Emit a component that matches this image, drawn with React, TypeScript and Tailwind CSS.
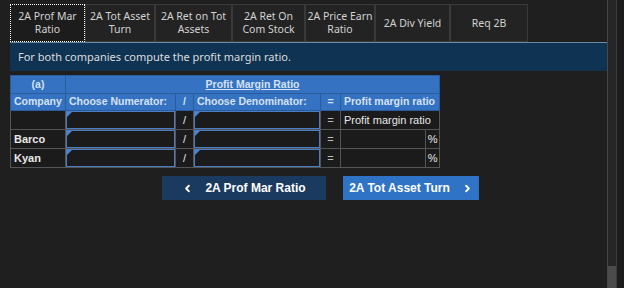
import React from "react";
import { ChevronLeft, ChevronRight } from "lucide-react";

const tabs = [
  { label: "2A Prof Mar Ratio", w: "w-[75px]", active: true },
  { label: "2A Tot Asset Turn", w: "w-[70px]" },
  { label: "2A Ret on Tot Assets", w: "w-[77px]" },
  { label: "2A Ret On Com Stock", w: "w-[73px]" },
  { label: "2A Price Earn Ratio", w: "w-[70px]" },
  { label: "2A Div Yield", w: "w-[75px]" },
  { label: "Req 2B", w: "w-[78px]" },
];

function InputCell() {
  return (
    <td className="border border-[#555] p-0 h-[19px]">
      <div className="relative h-[18px] border border-[#4a7ec4] bg-[#1b1b1b]">
        <span className="absolute left-0 top-0 w-0 h-0 border-t-[5px] border-t-[#4a86d0] border-r-[5px] border-r-transparent" />
      </div>
    </td>
  );
}

const rows = [
  { name: "", result: true },
  { name: "Barco" },
  { name: "Kyan" },
];

export default function App() {
  return (
    <div className="w-[624px] h-[288px] bg-[#1f1f1f] flex overflow-hidden" style={{ fontFamily: '"Noto Sans", sans-serif' }}>
      <div className="flex-1 pl-[10px] pt-[4px] flex flex-col">
        <div className="flex">
          {tabs.map((t) => (
            <div
              key={t.label}
              className={`${t.w} h-[38px] flex items-center justify-center text-center text-[10.5px] leading-[13px] text-[#d2d2d2] ${
                t.active ? "bg-[#1c1c1c] border border-dotted border-white" : "bg-[#232323] border border-[#3a3a3a]"
              }`}
            >
              {t.label}
            </div>
          ))}
        </div>
        <div className="h-[29px] bg-[#0f3352] border-t border-[#6d8ba3] flex items-center pl-[8px] text-[11px] text-[#dcdcdc]">
          For both companies compute the profit margin ratio.
        </div>

        <table
          className="mt-[4px] table-fixed border-collapse text-[11px] text-[#e8e8e8] w-[429px] whitespace-nowrap"
          style={{ fontFamily: '"Liberation Sans", Arial, sans-serif' }}
        >
          <colgroup>
            <col className="w-[55px]" />
            <col className="w-[110px]" />
            <col className="w-[18px]" />
            <col className="w-[127px]" />
            <col className="w-[20px]" />
            <col className="w-[85px]" />
            <col className="w-[14px]" />
          </colgroup>
          <thead className="text-[10.5px]">
            <tr className="h-[18px] bg-[#3572c2] text-[#d4e2f4]">
              <th className="border border-[#2a5b9b] font-bold p-0">(a)</th>
              <th colSpan={6} className="border border-[#2a5b9b] font-bold underline p-0">
                Profit Margin Ratio
              </th>
            </tr>
            <tr className="h-[17px] bg-[#3572c2] text-[#d4e2f4]">
              <th className="border border-[#2a5b9b] px-[3px] py-0 font-bold text-left">Company</th>
              <th className="border border-[#2a5b9b] px-[3px] py-0 font-bold text-left">Choose Numerator:</th>
              <th className="border border-[#2a5b9b] p-0 font-bold text-center">/</th>
              <th className="border border-[#2a5b9b] px-[3px] py-0 font-bold text-left">Choose Denominator:</th>
              <th className="border border-[#2a5b9b] p-0 font-bold text-center">=</th>
              <th colSpan={2} className="border border-[#2a5b9b] px-[3px] py-0 font-bold text-left">Profit margin ratio</th>
            </tr>
          </thead>
          <tbody className="bg-[#1b1b1b]">
            {rows.map((r, i) => (
              <tr key={i} className="h-[19px]">
                <td className="border border-[#555] px-[3px] py-0 font-bold">{r.name}</td>
                <InputCell />
                <td className="border border-[#555] p-0 text-center">/</td>
                <InputCell />
                <td className="border border-[#555] p-0 text-center text-[#bbb]">=</td>
                {r.result ? (
                  <td colSpan={2} className="border border-[#555] px-[3px] py-0">Profit margin ratio</td>
                ) : (
                  <>
                    <td className="border border-[#555] p-0" />
                    <td className="border border-[#555] p-0 text-center">%</td>
                  </>
                )}
              </tr>
            ))}
          </tbody>
        </table>

        <div
          className="flex gap-[17px] mt-[8px] ml-[152px] text-[12px] font-bold text-white"
          style={{ fontFamily: '"Liberation Sans", Arial, sans-serif' }}
        >
          <button className="w-[164px] h-[24px] bg-[#1a3a5f] flex items-center justify-center gap-[12px]">
            <ChevronLeft size={11} strokeWidth={4} />
            <span>2A Prof Mar Ratio</span>
          </button>
          <button className="w-[136px] h-[24px] bg-[#2f73c6] flex items-center justify-center gap-[12px]">
            <span>2A Tot Asset Turn</span>
            <ChevronRight size={11} strokeWidth={4} />
          </button>
        </div>
      </div>

      <div className="w-[17px] h-full flex">
        <div className="w-[9px] h-full bg-[#262626] border-l border-[#474747] flex flex-col justify-end">
          <div className="h-[22px] bg-[#4b4b4b]" />
        </div>
        <div className="flex-1 bg-[#1c1c1e] border-l border-[#3a3a3a]" />
      </div>
    </div>
  );
}
